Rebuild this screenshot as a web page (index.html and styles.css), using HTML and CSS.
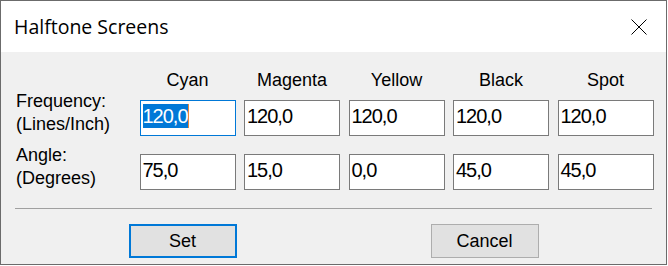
FILE: index.html
```html
<!DOCTYPE html>
<html lang="en">

<head>
  <meta charset="UTF-8">
  <meta name="viewport" content="width=device-width, initial-scale=1.0">
  <title>Halftone Screens</title>
  <link rel="stylesheet" href="styles.css">
</head>

<body>
  <div class="dialog">
    <header class="dialog__title">
      <h1>Halftone Screens</h1>
      <svg class="dialog__close" width="16" height="16" viewBox="0 0 16 16">
        <path d="M0.5 0.5 L15.5 15.5 M15.5 0.5 L0.5 15.5" stroke="#000" stroke-width="1" fill="none" />
      </svg>
    </header>

    <main class="dialog__body">
      <div class="screens__heads">
        <span></span>
        <span>Cyan</span>
        <span>Magenta</span>
        <span>Yellow</span>
        <span>Black</span>
        <span>Spot</span>
      </div>

      <div class="screens__fields">
        <label class="screens__label">Frequency:<br>(Lines/Inch)</label>
        <span class="field field--focus"><span class="field__sel">120,0</span></span>
        <span class="field">120,0</span>
        <span class="field">120,0</span>
        <span class="field">120,0</span>
        <span class="field">120,0</span>

        <label class="screens__label">Angle:<br>(Degrees)</label>
        <span class="field">75,0</span>
        <span class="field">15,0</span>
        <span class="field">0,0</span>
        <span class="field">45,0</span>
        <span class="field">45,0</span>
      </div>

      <hr>

      <div class="dialog__buttons">
        <button type="button" class="btn btn--default">Set</button>
        <button type="button" class="btn">Cancel</button>
      </div>
    </main>
  </div>
</body>

</html>
```

FILE: styles.css
```css
body {
  margin: 0;
  background: #fff;
}

.dialog {
  display: flex;
  flex-direction: column;
  width: 667px;
  height: 265px;
  box-sizing: border-box;
  border: 1px solid #6b6b6b;
  font-family: "Liberation Sans", Arial, sans-serif;
  font-size: 18px;
  color: #000;
}

.dialog__title {
  flex-shrink: 0;
  display: flex;
  align-items: center;
  justify-content: space-between;
  height: 51px;
  padding: 0 19px 0 13px;
  background: #fff;
}

.dialog__title h1 {
  margin: 0;
  font-family: "Open Sans", sans-serif;
  font-size: 19.5px;
  font-weight: normal;
}

.dialog__close {
  display: block;
}

.dialog__body {
  flex: 1;
  min-height: 0;
  background: #f0f0f0;
  padding-top: 18px;
}

.screens__heads,
.screens__fields {
  display: grid;
  grid-template-columns: 115px repeat(5, 96px);
  column-gap: 8.5px;
  padding-left: 15px;
}

.screens__heads {
  line-height: 20px;
  text-align: center;
  margin-bottom: 10px;
}

.screens__fields {
  grid-template-rows: 36px 36px;
  row-gap: 18px;
}

/* two lines, bottom-aligned with the boxes, spill upward */
.screens__label {
  align-self: end;
  line-height: 23px;
  white-space: nowrap;
}

.field {
  display: block;
  height: 36px;
  box-sizing: border-box;
  padding: 3px 2px 0;
  border: 1px solid #7a7a7a;
  background: #fff;
  font-size: 20px;
  letter-spacing: -1px;
  line-height: 24px;
}

.field--focus {
  border-color: #0078d7;
}

.field__sel {
  display: inline-block;
  position: relative;
  padding-right: 1px;
  background: #0078d7;
  color: #fff;
}

.field__sel::after {
  content: "";
  position: absolute;
  top: 0;
  right: 0;
  bottom: 0;
  width: 1px;
  background: #e8873a;
}

hr {
  border: none;
  border-top: 1px solid #a0a0a0;
  margin: 18px 14px 15px;
}

.dialog__buttons {
  display: flex;
  justify-content: center;
  gap: 194px;
}

.btn {
  width: 108px;
  height: 34px;
  padding: 0;
  border: 1px solid #adadad;
  background: #e1e1e1;
  font-family: "Liberation Sans", Arial, sans-serif;
  font-size: 18px;
  color: #000;
}

.btn--default {
  border: 2px solid #0078d7;
}
```
